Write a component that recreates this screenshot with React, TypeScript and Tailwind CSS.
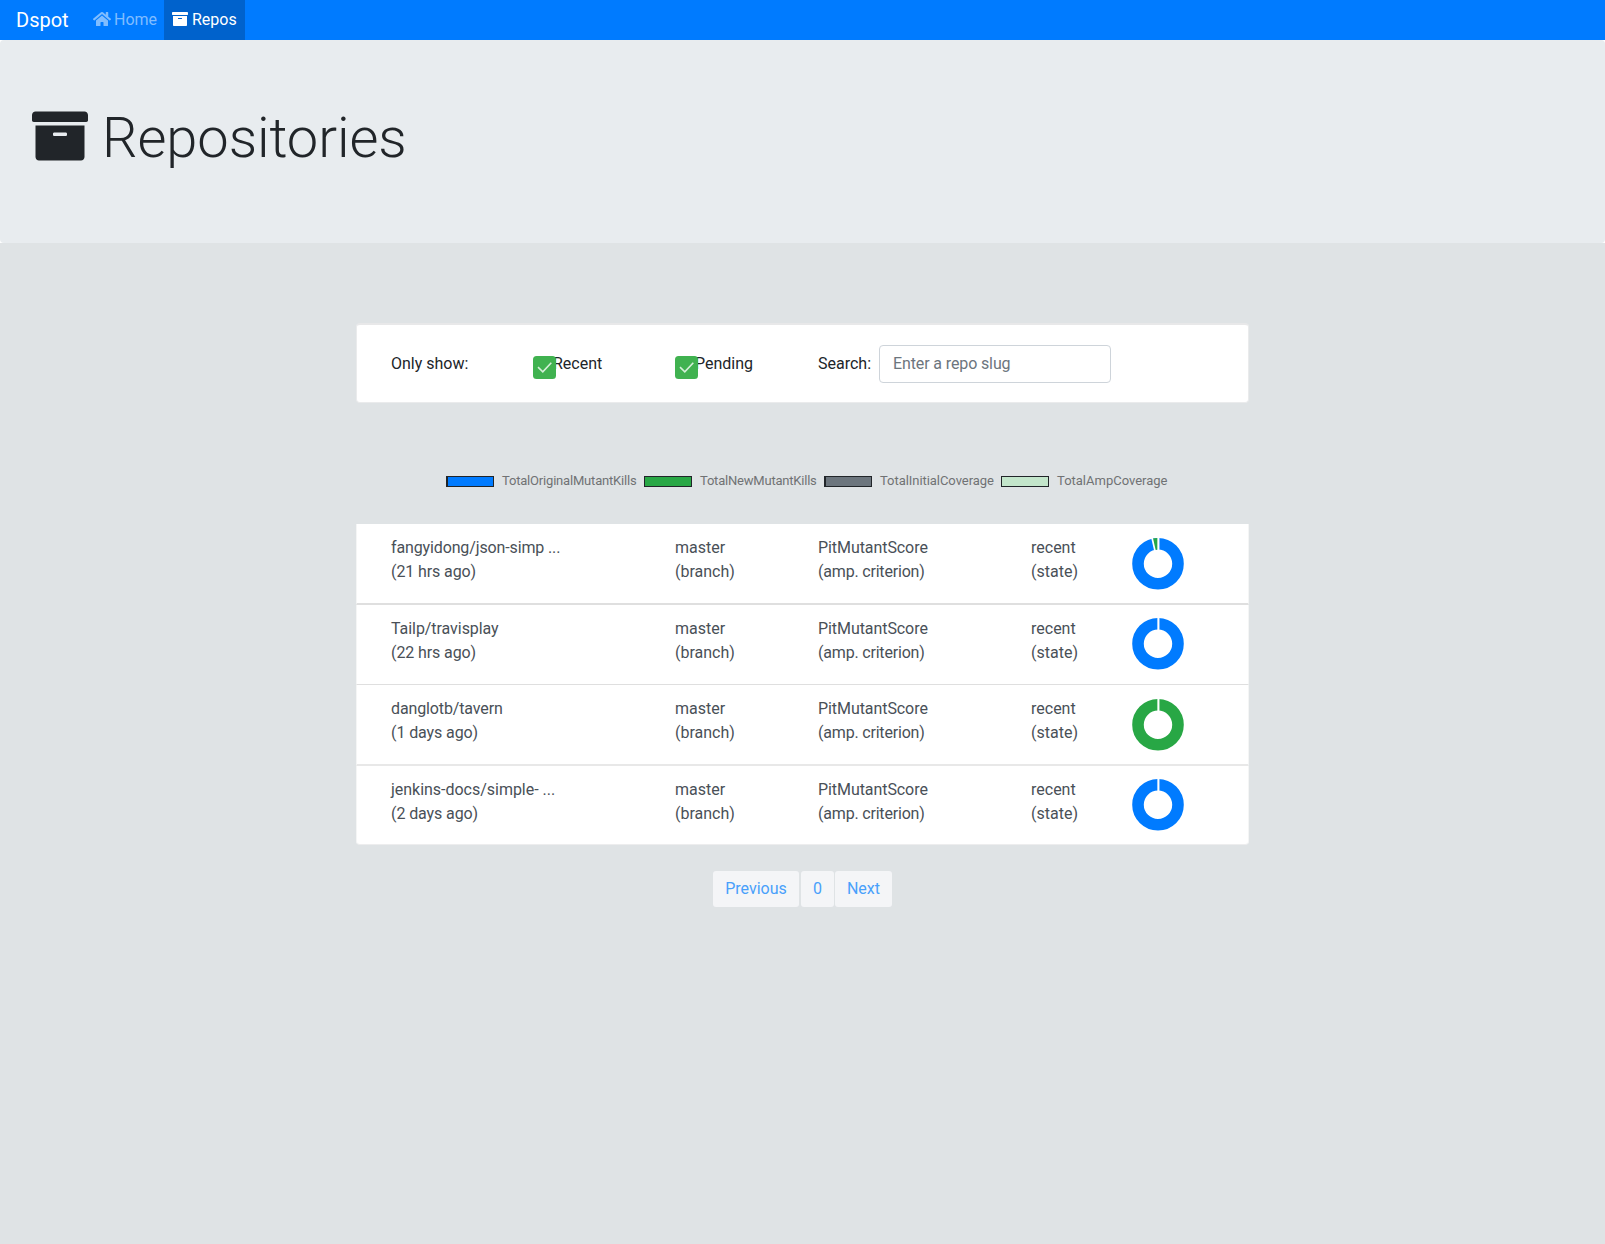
import React from "react";
import { FaArchive, FaHome } from "react-icons/fa";

const FONT = "font-['Roboto',sans-serif]";

type Repo = { slug: string; slugTracking: string; age: string; height: string; edge: string; chart: string; original: number; amplified: number };

const repos: Repo[] = [
  { slug: "fangyidong/json-simp ...", slugTracking: "tracking-[-0.13px]", age: "(21 hrs ago)", height: "h-[81px]", edge: "border-b-2 border-b-[#dfdfdf]", chart: "mt-[13px]", original: 96.4, amplified: 3.6 },
  { slug: "Tailp/travisplay", slugTracking: "tracking-[-0.06px]", age: "(22 hrs ago)", height: "h-[80px]", edge: "border-b border-b-[#dfdfdf]", chart: "mt-[12px]", original: 1, amplified: 0 },
  { slug: "danglotb/tavern", slugTracking: "tracking-[-0.13px]", age: "(1 days ago)", height: "h-[81px]", edge: "border-b-2 border-b-[#e8e8e8]", chart: "mt-[13px]", original: 0, amplified: 1 },
  { slug: "jenkins-docs/simple- ...", slugTracking: "tracking-[-0.02px]", age: "(2 days ago)", height: "h-[79px]", edge: "rounded-b border-b border-b-[#ededee]", chart: "mt-[12px]", original: 1, amplified: 0 },
];

const legend = [
  { label: "TotalOriginalMutantKills", color: "bg-[#007bff] border-l-2", width: "w-[198px]", tracking: "tracking-[-0.19px]" },
  { label: "TotalNewMutantKills", color: "bg-[#28a745]", width: "w-[180px]", tracking: "tracking-[-0.21px]" },
  { label: "TotalInitialCoverage", color: "bg-[#6c757d] border-l-2", width: "w-[177px]", tracking: "tracking-[-0.05px]" },
  { label: "TotalAmpCoverage", color: "bg-[#c3e6cb]", width: "w-[170px]", tracking: "tracking-normal" },
];

function Donut({ original, amplified }: { original: number; amplified: number }) {
  const total = original + amplified;
  const point = (r: number, f: number) => {
    const a = f * Math.PI * 2;
    return `${26 + r * Math.sin(a)} ${26.8 - r * Math.cos(a)}`;
  };
  const f = original / total;
  const main = original > 0 ? "#007bff" : "#28a745";
  return (
    <svg className="block h-[53px] w-[53px]" viewBox="0 0 53 53">
      <circle cx="26" cy="26.8" r="20" fill="none" stroke={main} strokeWidth="11.6" />
      {original > 0 && amplified > 0 && (
        <>
          <path
            d={`M${point(25.8, f)}A25.8 25.8 0 0 1 ${point(25.8, 1)}L${point(14.2, 1)}A14.2 14.2 0 0 0 ${point(14.2, f)}Z`}
            fill="#28a745"
          />
          <path d={`M${point(13.3, f)}L${point(27, f)}`} stroke="#fff" strokeWidth="1.7" />
        </>
      )}
      <path d="M26.4 0V13.8" stroke="#fff" strokeWidth="2.1" />
    </svg>
  );
}

function Check({ label }: { label: string }) {
  return (
    <label className="relative block w-[142px] pl-5 leading-6">
      {label}
      <svg className="absolute left-0 top-[4px] h-[23px] w-[23px]" viewBox="0 0 23 23">
        <rect width="23" height="23" rx="3.5" fill="#40b250" />
        <path d="M5 11.2L9.8 15.8L18.3 6.8" fill="none" stroke="#d5efd9" strokeWidth="1.6" />
      </svg>
    </label>
  );
}

export default function App() {
  return (
    <div className={`${FONT} min-h-[1244px] bg-[#dfe3e5] text-base leading-6 text-[#212529]`}>
      <nav className="flex h-10 items-stretch bg-[#007bff] pl-4">
        <a className="mr-[17px] w-[52px] pt-[5px] text-xl leading-[30px] text-white">Dspot</a>
        <a className="flex w-[79px] pl-2 pt-[8px] text-[#80bdff]">
          <FaHome className="mr-[3px] mt-[3px] h-4 w-[18px]" />
          Home
        </a>
        <a className="flex w-[81px] bg-[#0062cc] pl-2 pt-[8px] text-white">
          <FaArchive className="mr-1 mt-[3px] h-4 w-4" />
          Repos
        </a>
      </nav>
      <div className="bg-white">
        <header className="h-[203px] rounded bg-[#e8ecef] pl-8 pt-16">
          <h1 className="flex pt-px text-[56px] font-light leading-[67px] tracking-[-0.08px]">
            <FaArchive className="mr-[14px] mt-[3px] h-14 w-14" />
            Repositories
          </h1>
        </header>
      </div>

      <main className="mx-auto mt-20 w-[893px]">
        <section className="flex h-[80px] rounded border border-t-2 border-[#eaebec] border-t-[#e8e8e9] bg-white pl-[34px] pt-[27px]">
          <span className="w-[142px]">Only show:</span>
          <Check label="Recent" />
          <Check label="Pending" />
          <label className="flex pl-px">
            <span className="w-[61px]">Search:</span>
            <input
              className="-mt-[7px] h-[38px] w-[232px] rounded border border-[#ced4da] bg-white px-[13px] pb-[2px] tracking-[-0.12px] placeholder:text-[#6c757d] placeholder:opacity-100"
              placeholder="Enter a repo slug"
            />
          </label>
        </section>

        <div className="ml-[90px] mt-[69px] flex h-[20px] text-[13px] leading-[20px] text-[#707274]">
          {legend.map((l) => (
            <div key={l.label} className={`${l.width} ${l.tracking} flex shrink-0`}>
              <span className={`${l.color} mr-2 mt-[4px] h-[11px] w-12 shrink-0 border border-[#212529]`} />
              <span className="-mt-px">{l.label}</span>
            </div>
          ))}
        </div>

        <ul className="mt-[32px]">
          {repos.map((r) => (
            <li
              key={r.slug}
              className={`${r.height} ${r.edge} flex border-x border-x-[#f4f5f5] bg-white pl-[34px] text-[#495057]`}
            >
              <div className="w-[284px] pt-[12px]">
                <span className={r.slugTracking}>{r.slug}</span>
                <br />
                <span className="tracking-[-0.1px]">{r.age}</span>
              </div>
              <div className="w-[143px] pt-[12px]">master<br />(branch)</div>
              <div className="w-[213px] pt-[12px]">
                <span className="tracking-[-0.07px]">PitMutantScore</span>
                <br />
                <span className="tracking-[-0.19px]">(amp. criterion)</span>
              </div>
              <div className="w-[101px] pt-[12px]">recent<br />(state)</div>
              <div className={r.chart}>
                <Donut original={r.original} amplified={r.amplified} />
              </div>
            </li>
          ))}
        </ul>

        <div className="ml-[357px] mt-[26px] flex h-9 leading-[34px] text-[#48a0fb]">
          <button className="mr-[2px] w-[86px] rounded-[3px] bg-[#f4f5f7]">Previous</button>
          <button className="mr-[1px] w-[33px] rounded-[3px] bg-[#f4f5f7]">0</button>
          <button className="w-[57px] rounded-[3px] bg-[#f4f5f7]">Next</button>
        </div>
      </main>
    </div>
  );
}
